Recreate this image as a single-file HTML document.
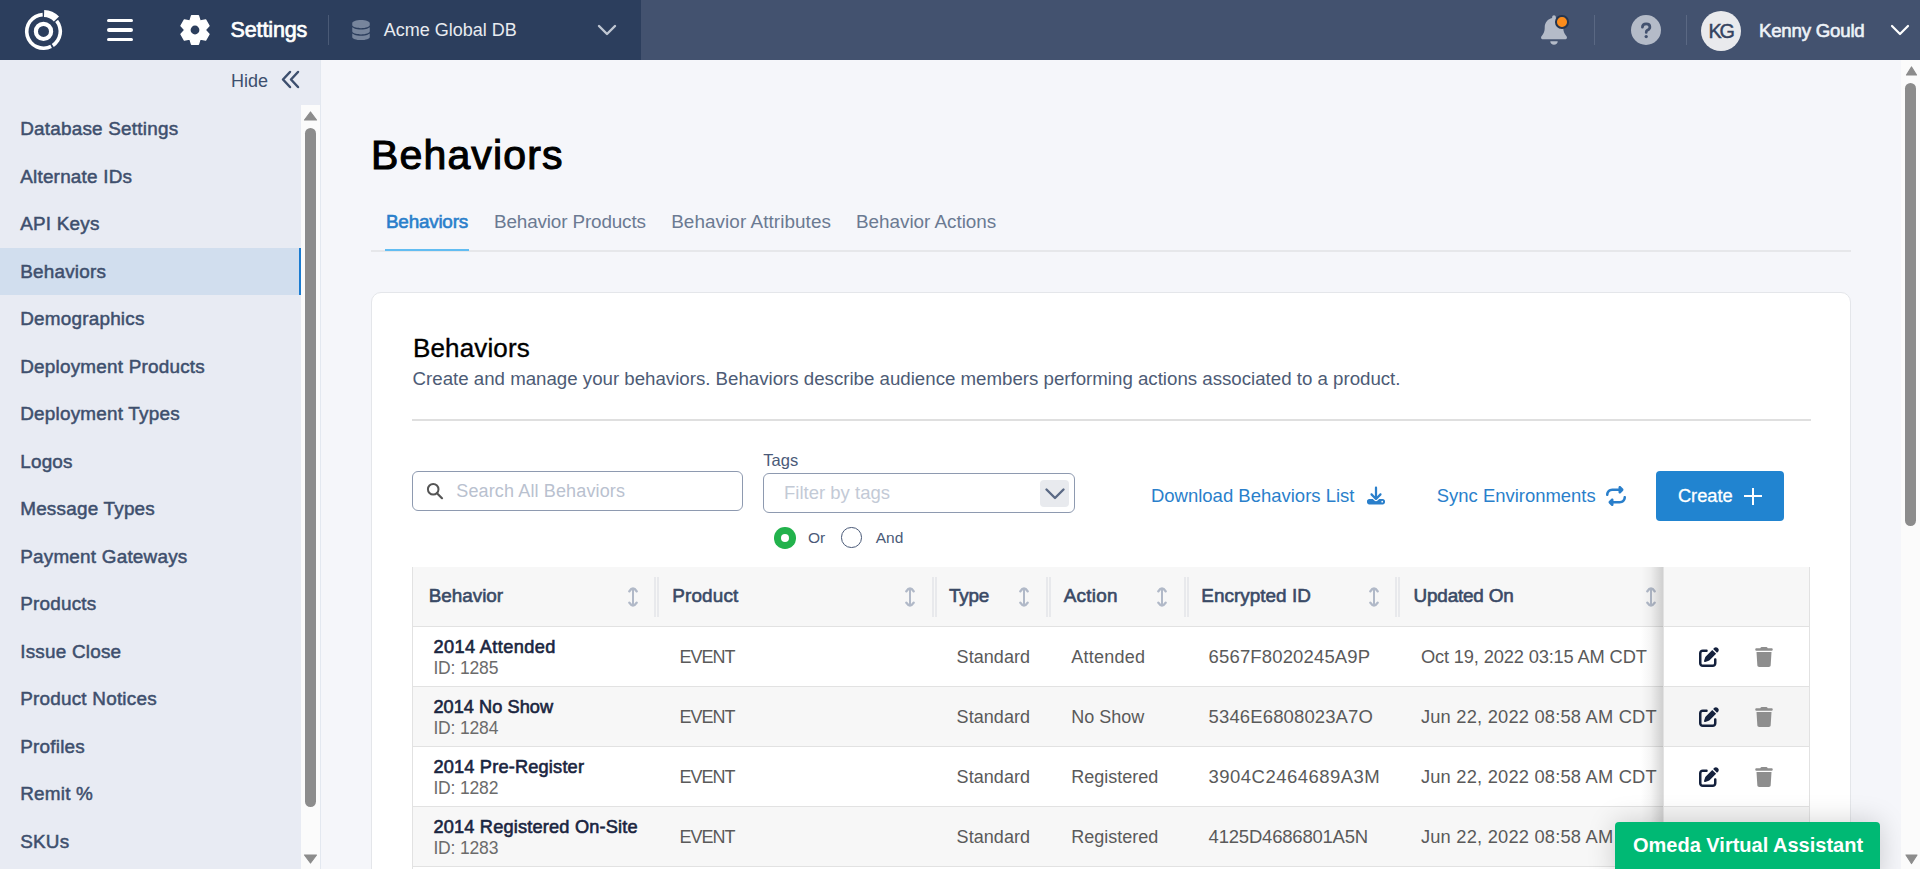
<!DOCTYPE html>
<html><head><meta charset="utf-8"><title>Behaviors</title>
<style>
html,body{margin:0;padding:0;}
body{width:1920px;height:869px;overflow:hidden;position:relative;background:#f5f6fa;font-family:"Liberation Sans", sans-serif;}
.t{position:absolute;white-space:nowrap;}
.r{position:absolute;box-sizing:content-box;}
svg.r{overflow:visible;}
</style></head><body>
<div class="r" style="left:0px;top:0px;width:641px;height:60px;background:#2c3e5d;"></div>
<div class="r" style="left:641px;top:0px;width:1279px;height:60px;background:#43526f;"></div>
<svg class="r" style="left:0px;top:0px;" width="100" height="60" viewBox="0 0 100 60"><circle cx="43.5" cy="31.4" r="7.6" fill="none" stroke="#fff" stroke-width="4.2"/><path d="M51.94 47.97 A18.6 18.6 0 1 1 42.59 12.82 L42.77 16.42 A15.0 15.0 0 1 0 50.31 44.77 ZM44.21 9.91 A21.5 21.5 0 0 1 59.02 16.52 L53.89 21.43 A14.4 14.4 0 0 0 43.98 17.01 ZM58.04 19.80 A18.6 18.6 0 0 1 53.77 46.91 L51.78 43.91 A15.0 15.0 0 0 0 55.22 22.04 Z" fill="#fff"/></svg>
<div class="r" style="left:107px;top:18.7px;width:26px;height:3.8px;border-radius:2px;background:#fff"></div>
<div class="r" style="left:107px;top:28.1px;width:26px;height:3.8px;border-radius:2px;background:#fff"></div>
<div class="r" style="left:107px;top:37.5px;width:26px;height:3.8px;border-radius:2px;background:#fff"></div>
<svg class="r" style="left:178px;top:13px;" width="34" height="34" viewBox="-17 -17 34 34"><path d="M-4.98 -9.36 L-3.41 -14.20 L3.41 -14.20 L4.98 -9.36 A10.6 10.6 0 0 1 5.62 -8.99 L5.62 -8.99 L10.59 -10.05 L14.00 -4.15 L10.59 -0.37 A10.6 10.6 0 0 1 10.59 0.37 L10.59 0.37 L14.00 4.15 L10.59 10.05 L5.62 8.99 A10.6 10.6 0 0 1 4.98 9.36 L4.98 9.36 L3.41 14.20 L-3.41 14.20 L-4.98 9.36 A10.6 10.6 0 0 1 -5.62 8.99 L-5.62 8.99 L-10.59 10.05 L-14.00 4.15 L-10.59 0.37 A10.6 10.6 0 0 1 -10.59 -0.37 L-10.59 -0.37 L-14.00 -4.15 L-10.59 -10.05 L-5.62 -8.99 A10.6 10.6 0 0 1 -4.98 -9.36 Z" fill="#fff" stroke="#fff" stroke-width="1.4" stroke-linejoin="round"/><circle r="4.4" fill="#2c3e5d"/></svg>
<div class="t" style="left:230.60px;top:20.00px;font-size:21.5px;line-height:21.5px;color:#ffffff;font-weight:400;letter-spacing:-0.141px;-webkit-text-stroke:0.7px #ffffff;">Settings</div>
<div class="r" style="left:328px;top:15px;width:1px;height:30px;background:#4a5a76;"></div>
<svg class="r" style="left:352px;top:20px;preserveAspectRatio:none" width="18" height="20" viewBox="0 0 448 512"><path d="M448 80v48c0 44.2-100.3 80-224 80S0 172.2 0 128V80C0 35.8 100.3 0 224 0S448 35.8 448 80zM393.2 214.7c20.8-7.4 39.9-16.9 54.8-28.6V288c0 44.2-100.3 80-224 80S0 332.2 0 288V186.1c14.9 11.8 34 21.2 54.8 28.6C99.7 230.7 159.5 240 224 240s124.3-9.3 169.2-25.3zM0 346.1c14.9 11.8 34 21.2 54.8 28.6C99.7 390.7 159.5 400 224 400s124.3-9.3 169.2-25.3c20.8-7.4 39.9-16.9 54.8-28.6V432c0 44.2-100.3 80-224 80S0 476.2 0 432V346.1z" fill="#77859c"/></svg>
<div class="t" style="left:383.70px;top:21.00px;font-size:18px;line-height:18px;color:#e8ebf0;font-weight:400;">Acme Global DB</div>
<svg class="r" style="left:596px;top:23px;" width="22" height="15" viewBox="0 0 22 15"><polyline points="3,3 11,11 19,3" fill="none" stroke="#c0c7d3" stroke-width="2.4" stroke-linecap="round" stroke-linejoin="round"/></svg>
<svg class="r" style="left:1541px;top:15px;" width="26" height="30" viewBox="0 0 448 512"><path d="M224 0c-17.7 0-32 14.3-32 32V51.2C119 66 64 130.6 64 208v18.8c0 47-17.3 92.4-48.5 127.6l-7.4 8.3c-8.4 9.4-10.4 22.9-5.3 34.4S19.4 416 32 416H416c12.6 0 24-7.4 29.2-18.9s3.1-25-5.3-34.4l-7.4-8.3C401.3 319.2 384 273.9 384 226.8V208c0-77.4-55-142-128-156.8V32c0-17.7-14.3-32-32-32zm45.3 493.3c12-12 18.7-28.3 18.7-45.3H224 160c0 17 6.7 33.3 18.7 45.3s28.3 18.7 45.3 18.7s33.3-6.7 45.3-18.7z" fill="#b4bbc8"/></svg>
<div class="r" style="left:1555.15px;top:15.35px;width:9.5px;height:9.5px;border-radius:50%;background:#fb8c1c;border:2px solid #25354f"></div>
<div class="r" style="left:1594px;top:15px;width:1px;height:30px;background:#5a6883;"></div>
<div class="r" style="left:1631px;top:15px;width:30px;height:30px;border-radius:50%;background:#b4bbc8"></div>
<svg class="r" style="left:1631px;top:15px;" width="30" height="30" viewBox="-15 -15 30 30"><path d="M-3.6 -2.8 Q-3.6 -6.2 0.2 -6.2 Q3.9 -6.2 3.9 -3.1 Q3.9 -1 1.3 0.3 Q0.2 0.9 0.2 2.4" fill="none" stroke="#43526f" stroke-width="2.7" stroke-linecap="round" stroke-linejoin="round"/><circle cx="0.2" cy="6.6" r="1.65" fill="#43526f"/></svg>
<div class="r" style="left:1686px;top:15px;width:1px;height:30px;background:#5a6883;"></div>
<div class="r" style="left:1701px;top:11px;width:40px;height:40px;border-radius:50%;background:#e9eaed"></div>
<div class="t" style="left:1708.60px;top:22.00px;font-size:19.8px;line-height:19.8px;color:#34435f;font-weight:400;letter-spacing:-2.311px;-webkit-text-stroke:0.45px #34435f">KG</div>
<div class="t" style="left:1758.90px;top:22.00px;font-size:18.7px;line-height:18.7px;color:#eef2f8;font-weight:400;letter-spacing:-0.222px;-webkit-text-stroke:0.6px #eef2f8;">Kenny Gould</div>
<svg class="r" style="left:1889px;top:22px;" width="22" height="16" viewBox="0 0 22 16"><polyline points="3,4 11,12 19,4" fill="none" stroke="#ffffff" stroke-width="2.2" stroke-linecap="round" stroke-linejoin="round"/></svg>
<div class="r" style="left:0px;top:60px;width:320px;height:809px;background:#e8ebf3;"></div>
<div class="r" style="left:320px;top:60px;width:1px;height:809px;background:#e3e8f0;"></div>
<div class="t" style="left:231.00px;top:72.00px;font-size:18px;line-height:18px;color:#3d4f6e;font-weight:400;">Hide</div>
<svg class="r" style="left:279px;top:69px;" width="24" height="22" viewBox="0 0 24 22"><polyline points="11,3 4,10.5 11,18" fill="none" stroke="#3d4f6e" stroke-width="2.5" stroke-linecap="round" stroke-linejoin="round"/><polyline points="19,3 12,10.5 19,18" fill="none" stroke="#3d4f6e" stroke-width="2.5" stroke-linecap="round" stroke-linejoin="round"/></svg>
<div class="t" style="left:20.20px;top:120.00px;font-size:18.9px;line-height:18.9px;color:#3e4f6d;font-weight:400;letter-spacing:0.22px;-webkit-text-stroke:0.5px #3e4f6d">Database Settings</div>
<div class="t" style="left:20.20px;top:168.00px;font-size:18.9px;line-height:18.9px;color:#3e4f6d;font-weight:400;letter-spacing:0.22px;-webkit-text-stroke:0.5px #3e4f6d">Alternate IDs</div>
<div class="t" style="left:20.20px;top:215.00px;font-size:18.9px;line-height:18.9px;color:#3e4f6d;font-weight:400;letter-spacing:0.22px;-webkit-text-stroke:0.5px #3e4f6d">API Keys</div>
<div class="r" style="left:0;top:248.0px;width:299px;height:47px;background:#d1deee"></div>
<div class="r" style="left:299px;top:248.0px;width:2px;height:47px;background:#1a7bd0"></div>
<div class="t" style="left:20.20px;top:263.00px;font-size:18.9px;line-height:18.9px;color:#3e4f6d;font-weight:400;letter-spacing:0.22px;-webkit-text-stroke:0.5px #3e4f6d">Behaviors</div>
<div class="t" style="left:20.20px;top:310.00px;font-size:18.9px;line-height:18.9px;color:#3e4f6d;font-weight:400;letter-spacing:0.22px;-webkit-text-stroke:0.5px #3e4f6d">Demographics</div>
<div class="t" style="left:20.20px;top:358.00px;font-size:18.9px;line-height:18.9px;color:#3e4f6d;font-weight:400;letter-spacing:0.22px;-webkit-text-stroke:0.5px #3e4f6d">Deployment Products</div>
<div class="t" style="left:20.20px;top:405.00px;font-size:18.9px;line-height:18.9px;color:#3e4f6d;font-weight:400;letter-spacing:0.22px;-webkit-text-stroke:0.5px #3e4f6d">Deployment Types</div>
<div class="t" style="left:20.20px;top:453.00px;font-size:18.9px;line-height:18.9px;color:#3e4f6d;font-weight:400;letter-spacing:0.22px;-webkit-text-stroke:0.5px #3e4f6d">Logos</div>
<div class="t" style="left:20.20px;top:500.00px;font-size:18.9px;line-height:18.9px;color:#3e4f6d;font-weight:400;letter-spacing:0.22px;-webkit-text-stroke:0.5px #3e4f6d">Message Types</div>
<div class="t" style="left:20.20px;top:548.00px;font-size:18.9px;line-height:18.9px;color:#3e4f6d;font-weight:400;letter-spacing:0.22px;-webkit-text-stroke:0.5px #3e4f6d">Payment Gateways</div>
<div class="t" style="left:20.20px;top:595.00px;font-size:18.9px;line-height:18.9px;color:#3e4f6d;font-weight:400;letter-spacing:0.22px;-webkit-text-stroke:0.5px #3e4f6d">Products</div>
<div class="t" style="left:20.20px;top:643.00px;font-size:18.9px;line-height:18.9px;color:#3e4f6d;font-weight:400;letter-spacing:0.22px;-webkit-text-stroke:0.5px #3e4f6d">Issue Close</div>
<div class="t" style="left:20.20px;top:690.00px;font-size:18.9px;line-height:18.9px;color:#3e4f6d;font-weight:400;letter-spacing:0.22px;-webkit-text-stroke:0.5px #3e4f6d">Product Notices</div>
<div class="t" style="left:20.20px;top:738.00px;font-size:18.9px;line-height:18.9px;color:#3e4f6d;font-weight:400;letter-spacing:0.22px;-webkit-text-stroke:0.5px #3e4f6d">Profiles</div>
<div class="t" style="left:20.20px;top:785.00px;font-size:18.9px;line-height:18.9px;color:#3e4f6d;font-weight:400;letter-spacing:0.22px;-webkit-text-stroke:0.5px #3e4f6d">Remit %</div>
<div class="t" style="left:20.20px;top:833.00px;font-size:18.9px;line-height:18.9px;color:#3e4f6d;font-weight:400;letter-spacing:0.22px;-webkit-text-stroke:0.5px #3e4f6d">SKUs</div>
<div class="r" style="left:301px;top:105px;width:19px;height:764px;background:#fbfbfb;"></div>
<svg class="r" style="left:301px;top:105px;" width="19" height="20" viewBox="0 0 19 20"><polygon points="9.5,7 15.5,15 3.5,15" fill="#8c8c8c" stroke="#8c8c8c" stroke-width="1.2" stroke-linejoin="round"/></svg>
<div class="r" style="left:305px;top:128px;width:11px;height:679px;border-radius:5.5px;background:#8c8c8c"></div>
<svg class="r" style="left:301px;top:850px;" width="19" height="19" viewBox="0 0 19 19"><polygon points="3.5,5 15.5,5 9.5,13" fill="#8c8c8c" stroke="#8c8c8c" stroke-width="1.2" stroke-linejoin="round"/></svg>
<div class="r" style="left:321px;top:60px;width:1580px;height:809px;background:#f5f6fa;"></div>
<div class="t" style="left:371.00px;top:135.00px;font-size:41px;line-height:41px;color:#000000;font-weight:400;letter-spacing:1.147px;-webkit-text-stroke:1.1px #000">Behaviors</div>
<div class="r" style="left:371px;top:250px;width:1480px;height:2px;background:#e6e7ea;"></div>
<div class="r" style="left:385px;top:248.8px;width:84px;height:2.2px;background:#62bdf2;"></div>
<div class="t" style="left:386.00px;top:213.00px;font-size:18.9px;line-height:18.9px;color:#2a7fcb;font-weight:400;letter-spacing:-0.231px;-webkit-text-stroke:0.6px #2a7fcb;">Behaviors</div>
<div class="t" style="left:494.00px;top:213.00px;font-size:18.9px;line-height:18.9px;color:#6b7a92;font-weight:400;letter-spacing:-0.152px;">Behavior Products</div>
<div class="t" style="left:671.20px;top:213.00px;font-size:18.9px;line-height:18.9px;color:#6b7a92;font-weight:400;letter-spacing:0.065px;">Behavior Attributes</div>
<div class="t" style="left:856.00px;top:213.00px;font-size:18.9px;line-height:18.9px;color:#6b7a92;font-weight:400;letter-spacing:-0.032px;">Behavior Actions</div>
<div class="r" style="left:371px;top:292px;width:1478px;height:600px;background:#fff;border:1px solid #e4e6ea;border-radius:10px"></div>
<div class="t" style="left:413.00px;top:335.00px;font-size:26px;line-height:26px;color:#000000;font-weight:400;letter-spacing:0.135px;-webkit-text-stroke:0.35px #000">Behaviors</div>
<div class="t" style="left:412.60px;top:370.00px;font-size:18.7px;line-height:18.7px;color:#4d5b75;font-weight:400;letter-spacing:-0.009px;">Create and manage your behaviors. Behaviors describe audience members performing actions associated to a product.</div>
<div class="r" style="left:412px;top:419px;width:1399px;height:2px;background:#dfdfdf;"></div>
<div class="r" style="left:412px;top:471px;width:329px;height:38px;border:1px solid #8e9ab0;border-radius:6px;background:#fff"></div>
<svg class="r" style="left:426px;top:482px;" width="18" height="18" viewBox="0 0 18 18"><circle cx="7.2" cy="7.3" r="5.3" fill="none" stroke="#555" stroke-width="2"/><line x1="11" y1="11.2" x2="16" y2="16.2" stroke="#555" stroke-width="2.2" stroke-linecap="round"/></svg>
<div class="t" style="left:456.25px;top:482.00px;font-size:18px;line-height:18px;color:#b9c1cf;font-weight:400;letter-spacing:0.138px;">Search All Behaviors</div>
<div class="t" style="left:763.30px;top:452.00px;font-size:16.5px;line-height:16.5px;color:#4a5a78;font-weight:400;">Tags</div>
<div class="r" style="left:763px;top:473px;width:310px;height:38px;border:1px solid #8e9ab0;border-radius:6px;background:#fff"></div>
<div class="t" style="left:784.00px;top:484.00px;font-size:18.5px;line-height:18.5px;color:#c3cad6;font-weight:400;letter-spacing:0.008px;">Filter by tags</div>
<div class="r" style="left:1040px;top:479.5px;width:29px;height:27.5px;border-radius:4px;background:#e8eaee"></div>
<svg class="r" style="left:1043px;top:485px;" width="24" height="18" viewBox="0 0 24 18"><polyline points="3.5,4.5 12,13 20.5,4.5" fill="none" stroke="#5b6a85" stroke-width="2.4" stroke-linecap="round" stroke-linejoin="round"/></svg>
<div class="r" style="left:774.2px;top:527.1px;width:21.6px;height:21.6px;border-radius:50%;background:#22b24c"></div>
<div class="r" style="left:780.85px;top:533.75px;width:8.3px;height:8.3px;border-radius:50%;background:#fff"></div>
<div class="t" style="left:808.00px;top:530.00px;font-size:15.5px;line-height:15.5px;color:#4a5a78;font-weight:400;">Or</div>
<div class="r" style="left:841.3px;top:527.2px;width:18.4px;height:18.4px;border-radius:50%;border:1.5px solid #4a5a78;background:#fff"></div>
<div class="t" style="left:875.70px;top:530.00px;font-size:15.5px;line-height:15.5px;color:#4a5a78;font-weight:400;">And</div>
<div class="t" style="left:1150.90px;top:487.00px;font-size:18.5px;line-height:18.5px;color:#2a7fcb;font-weight:400;">Download Behaviors List</div>
<svg class="r" style="left:1367px;top:486px;" width="18" height="19" viewBox="0 0 512 512"><path d="M288 32c0-17.7-14.3-32-32-32s-32 14.3-32 32V274.7l-73.4-73.4c-12.5-12.5-32.8-12.5-45.3 0s-12.5 32.8 0 45.3l128 128c12.5 12.5 32.8 12.5 45.3 0l128-128c12.5-12.5 12.5-32.8 0-45.3s-32.8-12.5-45.3 0L288 274.7V32zM64 352c-35.3 0-64 28.7-64 64v32c0 35.3 28.7 64 64 64H448c35.3 0 64-28.7 64-64V416c0-35.3-28.7-64-64-64H346.5l-45.3 45.3c-25 25-65.5 25-90.5 0L165.5 352H64zm368 56a24 24 0 1 1 0 48 24 24 0 1 1 0-48z" fill="#2a7fcb"/></svg>
<div class="t" style="left:1436.80px;top:487.00px;font-size:18.45px;line-height:18.45px;color:#2a7fcb;font-weight:400;">Sync Environments</div>
<svg class="r" style="left:1606px;top:486px;" width="20" height="20" viewBox="0 0 512 512"><path d="M0 224c0 17.7 14.3 32 32 32s32-14.3 32-32c0-53 43-96 96-96H320v32c0 12.9 7.8 24.6 19.8 29.6s25.7 2.2 34.9-6.9l64-64c12.5-12.5 12.5-32.8 0-45.3l-64-64c-9.2-9.2-22.9-11.9-34.9-6.9S320 19.1 320 32V64H160C71.6 64 0 135.6 0 224zm512 64c0-17.7-14.3-32-32-32s-32 14.3-32 32c0 53-43 96-96 96H192V352c0-12.9-7.8-24.6-19.8-29.6s-25.7-2.2-34.9 6.9l-64 64c-12.5 12.5-12.5 32.8 0 45.3l64 64c9.2 9.2 22.9 11.9 34.9 6.9s19.8-16.6 19.8-29.6V448H352c88.4 0 160-71.6 160-160z" fill="#2a7fcb"/></svg>
<div class="r" style="left:1656px;top:471px;width:128px;height:50px;border-radius:4px;background:#2184d0"></div>
<div class="t" style="left:1677.90px;top:487.00px;font-size:18.3px;line-height:18.3px;color:#ffffff;font-weight:400;-webkit-text-stroke:0.3px #fff">Create</div>
<div class="r" style="left:1744px;top:495.2px;width:18px;height:2px;background:#fff;"></div>
<div class="r" style="left:1752px;top:487.7px;width:2px;height:17px;background:#fff;"></div>
<div class="r" style="left:412px;top:567px;width:1398px;height:60px;background:#f7f7f7;"></div>
<div class="t" style="left:428.70px;top:587.00px;font-size:18.9px;line-height:18.9px;color:#3a4a66;font-weight:400;letter-spacing:-0.014px;-webkit-text-stroke:0.6px #3a4a66;">Behavior</div>
<svg class="r" style="left:627.8px;top:585.5px;" width="10" height="22" viewBox="0 0 10 22"><path d="M5 2.5 L5 19.5" stroke="#b1b9c8" stroke-width="2" fill="none"/><path d="M1.3 5.3 Q5 -0.4 8.7 5.3" stroke="#b1b9c8" stroke-width="2.4" fill="none" stroke-linecap="round"/><path d="M1.3 16.7 Q5 22.4 8.7 16.7" stroke="#b1b9c8" stroke-width="2.4" fill="none" stroke-linecap="round"/></svg>
<div class="t" style="left:672.20px;top:587.00px;font-size:18.9px;line-height:18.9px;color:#3a4a66;font-weight:400;letter-spacing:0.160px;-webkit-text-stroke:0.6px #3a4a66;">Product</div>
<svg class="r" style="left:905px;top:585.5px;" width="10" height="22" viewBox="0 0 10 22"><path d="M5 2.5 L5 19.5" stroke="#b1b9c8" stroke-width="2" fill="none"/><path d="M1.3 5.3 Q5 -0.4 8.7 5.3" stroke="#b1b9c8" stroke-width="2.4" fill="none" stroke-linecap="round"/><path d="M1.3 16.7 Q5 22.4 8.7 16.7" stroke="#b1b9c8" stroke-width="2.4" fill="none" stroke-linecap="round"/></svg>
<div class="t" style="left:949.10px;top:587.00px;font-size:18.9px;line-height:18.9px;color:#3a4a66;font-weight:400;letter-spacing:-0.225px;-webkit-text-stroke:0.6px #3a4a66;">Type</div>
<svg class="r" style="left:1019px;top:585.5px;" width="10" height="22" viewBox="0 0 10 22"><path d="M5 2.5 L5 19.5" stroke="#b1b9c8" stroke-width="2" fill="none"/><path d="M1.3 5.3 Q5 -0.4 8.7 5.3" stroke="#b1b9c8" stroke-width="2.4" fill="none" stroke-linecap="round"/><path d="M1.3 16.7 Q5 22.4 8.7 16.7" stroke="#b1b9c8" stroke-width="2.4" fill="none" stroke-linecap="round"/></svg>
<div class="t" style="left:1063.70px;top:587.00px;font-size:18.9px;line-height:18.9px;color:#3a4a66;font-weight:400;letter-spacing:0.273px;-webkit-text-stroke:0.6px #3a4a66;">Action</div>
<svg class="r" style="left:1156.8px;top:585.5px;" width="10" height="22" viewBox="0 0 10 22"><path d="M5 2.5 L5 19.5" stroke="#b1b9c8" stroke-width="2" fill="none"/><path d="M1.3 5.3 Q5 -0.4 8.7 5.3" stroke="#b1b9c8" stroke-width="2.4" fill="none" stroke-linecap="round"/><path d="M1.3 16.7 Q5 22.4 8.7 16.7" stroke="#b1b9c8" stroke-width="2.4" fill="none" stroke-linecap="round"/></svg>
<div class="t" style="left:1201.30px;top:587.00px;font-size:18.9px;line-height:18.9px;color:#3a4a66;font-weight:400;letter-spacing:0.032px;-webkit-text-stroke:0.6px #3a4a66;">Encrypted ID</div>
<svg class="r" style="left:1368.5px;top:585.5px;" width="10" height="22" viewBox="0 0 10 22"><path d="M5 2.5 L5 19.5" stroke="#b1b9c8" stroke-width="2" fill="none"/><path d="M1.3 5.3 Q5 -0.4 8.7 5.3" stroke="#b1b9c8" stroke-width="2.4" fill="none" stroke-linecap="round"/><path d="M1.3 16.7 Q5 22.4 8.7 16.7" stroke="#b1b9c8" stroke-width="2.4" fill="none" stroke-linecap="round"/></svg>
<div class="t" style="left:1413.60px;top:587.00px;font-size:18.9px;line-height:18.9px;color:#3a4a66;font-weight:400;letter-spacing:-0.191px;-webkit-text-stroke:0.6px #3a4a66;">Updated On</div>
<svg class="r" style="left:1645.5px;top:585.5px;" width="10" height="22" viewBox="0 0 10 22"><path d="M5 2.5 L5 19.5" stroke="#b1b9c8" stroke-width="2" fill="none"/><path d="M1.3 5.3 Q5 -0.4 8.7 5.3" stroke="#b1b9c8" stroke-width="2.4" fill="none" stroke-linecap="round"/><path d="M1.3 16.7 Q5 22.4 8.7 16.7" stroke="#b1b9c8" stroke-width="2.4" fill="none" stroke-linecap="round"/></svg>
<div class="r" style="left:654px;top:577px;width:2px;height:40px;background:#e8e9ec;"></div>
<div class="r" style="left:657px;top:577px;width:2px;height:40px;background:#e8e9ec;"></div>
<div class="r" style="left:932px;top:577px;width:2px;height:40px;background:#e8e9ec;"></div>
<div class="r" style="left:935px;top:577px;width:2px;height:40px;background:#e8e9ec;"></div>
<div class="r" style="left:1046px;top:577px;width:2px;height:40px;background:#e8e9ec;"></div>
<div class="r" style="left:1049px;top:577px;width:2px;height:40px;background:#e8e9ec;"></div>
<div class="r" style="left:1184px;top:577px;width:2px;height:40px;background:#e8e9ec;"></div>
<div class="r" style="left:1187px;top:577px;width:2px;height:40px;background:#e8e9ec;"></div>
<div class="r" style="left:1395px;top:577px;width:2px;height:40px;background:#e8e9ec;"></div>
<div class="r" style="left:1398px;top:577px;width:2px;height:40px;background:#e8e9ec;"></div>
<div class="r" style="left:412px;top:626px;width:1398px;height:1px;background:#e2e2e2;"></div>
<div class="r" style="left:412px;top:627px;width:1398px;height:59px;background:#ffffff;"></div>
<div class="r" style="left:412px;top:686px;width:1398px;height:1px;background:#e2e2e2;"></div>
<div class="t" style="left:433.40px;top:638.00px;font-size:18.2px;line-height:18.2px;color:#1a2540;font-weight:400;letter-spacing:0.383px;-webkit-text-stroke:0.6px #1a2540;">2014 Attended</div>
<div class="t" style="left:433.40px;top:660.00px;font-size:17.5px;line-height:17.5px;color:#6b6b6b;font-weight:400;letter-spacing:-0.166px;">ID: 1285</div>
<div class="t" style="left:679.40px;top:648.00px;font-size:18px;line-height:18px;color:#5a5a5a;font-weight:400;letter-spacing:-0.978px;">EVENT</div>
<div class="t" style="left:956.60px;top:648.00px;font-size:18px;line-height:18px;color:#5a5a5a;font-weight:400;letter-spacing:0.050px;">Standard</div>
<div class="t" style="left:1071.30px;top:648.00px;font-size:18px;line-height:18px;color:#5a5a5a;font-weight:400;letter-spacing:0.220px;">Attended</div>
<div class="t" style="left:1208.60px;top:648.00px;font-size:18.5px;line-height:18.5px;color:#5a5a5a;font-weight:400;letter-spacing:0.147px;">6567F8020245A9P</div>
<div class="t" style="left:1420.90px;top:648.00px;font-size:18.3px;line-height:18.3px;color:#5a5a5a;font-weight:400;letter-spacing:-0.154px;">Oct 19, 2022 03:15 AM CDT</div>
<div class="r" style="left:412px;top:687px;width:1398px;height:59px;background:#f7f7f7;"></div>
<div class="r" style="left:412px;top:746px;width:1398px;height:1px;background:#e2e2e2;"></div>
<div class="t" style="left:433.40px;top:698.00px;font-size:18.2px;line-height:18.2px;color:#1a2540;font-weight:400;letter-spacing:0.041px;-webkit-text-stroke:0.6px #1a2540;">2014 No Show</div>
<div class="t" style="left:433.40px;top:720.00px;font-size:17.5px;line-height:17.5px;color:#6b6b6b;font-weight:400;letter-spacing:-0.166px;">ID: 1284</div>
<div class="t" style="left:679.40px;top:708.00px;font-size:18px;line-height:18px;color:#5a5a5a;font-weight:400;letter-spacing:-0.978px;">EVENT</div>
<div class="t" style="left:956.60px;top:708.00px;font-size:18px;line-height:18px;color:#5a5a5a;font-weight:400;letter-spacing:0.050px;">Standard</div>
<div class="t" style="left:1071.30px;top:708.00px;font-size:18px;line-height:18px;color:#5a5a5a;font-weight:400;letter-spacing:-0.015px;">No Show</div>
<div class="t" style="left:1208.60px;top:708.00px;font-size:18.5px;line-height:18.5px;color:#5a5a5a;font-weight:400;letter-spacing:0.126px;">5346E6808023A7O</div>
<div class="t" style="left:1420.90px;top:708.00px;font-size:18.3px;line-height:18.3px;color:#5a5a5a;font-weight:400;letter-spacing:0.212px;">Jun 22, 2022 08:58 AM CDT</div>
<div class="r" style="left:412px;top:747px;width:1398px;height:59px;background:#ffffff;"></div>
<div class="r" style="left:412px;top:806px;width:1398px;height:1px;background:#e2e2e2;"></div>
<div class="t" style="left:433.40px;top:758.00px;font-size:18.2px;line-height:18.2px;color:#1a2540;font-weight:400;letter-spacing:0.187px;-webkit-text-stroke:0.6px #1a2540;">2014 Pre-Register</div>
<div class="t" style="left:433.40px;top:780.00px;font-size:17.5px;line-height:17.5px;color:#6b6b6b;font-weight:400;letter-spacing:-0.166px;">ID: 1282</div>
<div class="t" style="left:679.40px;top:768.00px;font-size:18px;line-height:18px;color:#5a5a5a;font-weight:400;letter-spacing:-0.978px;">EVENT</div>
<div class="t" style="left:956.60px;top:768.00px;font-size:18px;line-height:18px;color:#5a5a5a;font-weight:400;letter-spacing:0.050px;">Standard</div>
<div class="t" style="left:1071.30px;top:768.00px;font-size:18px;line-height:18px;color:#5a5a5a;font-weight:400;letter-spacing:-0.005px;">Registered</div>
<div class="t" style="left:1208.60px;top:768.00px;font-size:18.5px;line-height:18.5px;color:#5a5a5a;font-weight:400;letter-spacing:0.459px;">3904C2464689A3M</div>
<div class="t" style="left:1420.90px;top:768.00px;font-size:18.3px;line-height:18.3px;color:#5a5a5a;font-weight:400;letter-spacing:0.212px;">Jun 22, 2022 08:58 AM CDT</div>
<div class="r" style="left:412px;top:807px;width:1398px;height:59px;background:#f7f7f7;"></div>
<div class="r" style="left:412px;top:866px;width:1398px;height:1px;background:#e2e2e2;"></div>
<div class="t" style="left:433.40px;top:818.00px;font-size:18.2px;line-height:18.2px;color:#1a2540;font-weight:400;letter-spacing:0.186px;-webkit-text-stroke:0.6px #1a2540;">2014 Registered On-Site</div>
<div class="t" style="left:433.40px;top:840.00px;font-size:17.5px;line-height:17.5px;color:#6b6b6b;font-weight:400;letter-spacing:-0.166px;">ID: 1283</div>
<div class="t" style="left:679.40px;top:828.00px;font-size:18px;line-height:18px;color:#5a5a5a;font-weight:400;letter-spacing:-0.978px;">EVENT</div>
<div class="t" style="left:956.60px;top:828.00px;font-size:18px;line-height:18px;color:#5a5a5a;font-weight:400;letter-spacing:0.050px;">Standard</div>
<div class="t" style="left:1071.30px;top:828.00px;font-size:18px;line-height:18px;color:#5a5a5a;font-weight:400;letter-spacing:-0.005px;">Registered</div>
<div class="t" style="left:1208.60px;top:828.00px;font-size:18.5px;line-height:18.5px;color:#5a5a5a;font-weight:400;letter-spacing:-0.209px;">4125D4686801A5N</div>
<div class="t" style="left:1420.90px;top:828.00px;font-size:18.3px;line-height:18.3px;color:#5a5a5a;font-weight:400;letter-spacing:0.212px;">Jun 22, 2022 08:58 AM CDT</div>
<div class="r" style="left:412px;top:567px;width:1px;height:302px;background:#e2e2e2;"></div>
<div class="r" style="left:1641px;top:567px;width:22px;height:302px;background:linear-gradient(to right, rgba(0,0,0,0) 0%, rgba(0,0,0,0.04) 45%, rgba(0,0,0,0.16) 100%)"></div>
<div class="r" style="left:1663px;top:567px;width:147px;height:59px;background:#f7f7f7;"></div>
<div class="r" style="left:1663px;top:626px;width:147px;height:1px;background:#e2e2e2;"></div>
<div class="r" style="left:1663px;top:627px;width:147px;height:59px;background:#ffffff;"></div>
<div class="r" style="left:1663px;top:686px;width:147px;height:1px;background:#e2e2e2;"></div>
<svg class="r" style="left:1699px;top:647px;" width="20" height="20" viewBox="0 0 512 512"><path d="M471.6 21.7c-21.9-21.9-57.3-21.9-79.2 0L362.3 51.7l97.9 97.9 30.1-30.1c21.9-21.9 21.9-57.3 0-79.2L471.6 21.7zm-299.2 220c-6.1 6.1-10.8 13.6-13.5 21.9l-29.6 88.8c-2.9 8.6-.6 18.1 5.8 24.6s15.9 8.7 24.6 5.8l88.8-29.6c8.2-2.7 15.7-7.4 21.9-13.5L437.7 172.3 339.7 74.3 172.4 241.7zM96 64C43 64 0 107 0 160V416c0 53 43 96 96 96H352c53 0 96-43 96-96V320c0-17.7-14.3-32-32-32s-32 14.3-32 32v96c0 17.7-14.3 32-32 32H96c-17.7 0-32-14.3-32-32V160c0-17.7 14.3-32 32-32h96c17.7 0 32-14.3 32-32s-14.3-32-32-32H96z" fill="#14213d"/></svg>
<svg class="r" style="left:1755px;top:647px;" width="18" height="20" viewBox="0 0 448 512"><path d="M135.2 17.7L128 32H32C14.3 32 0 46.3 0 64S14.3 96 32 96H416c17.7 0 32-14.3 32-32s-14.3-32-32-32H320l-7.2-14.3C307.4 6.8 296.3 0 284.2 0H163.8c-12.1 0-23.2 6.8-28.6 17.7zM416 128H32L53.2 467c1.6 25.3 22.6 45 47.9 45H346.9c25.3 0 46.3-19.7 47.9-45L416 128z" fill="#8e8e8e"/></svg>
<div class="r" style="left:1663px;top:687px;width:147px;height:59px;background:#f5f5f5;"></div>
<div class="r" style="left:1663px;top:746px;width:147px;height:1px;background:#e2e2e2;"></div>
<svg class="r" style="left:1699px;top:707px;" width="20" height="20" viewBox="0 0 512 512"><path d="M471.6 21.7c-21.9-21.9-57.3-21.9-79.2 0L362.3 51.7l97.9 97.9 30.1-30.1c21.9-21.9 21.9-57.3 0-79.2L471.6 21.7zm-299.2 220c-6.1 6.1-10.8 13.6-13.5 21.9l-29.6 88.8c-2.9 8.6-.6 18.1 5.8 24.6s15.9 8.7 24.6 5.8l88.8-29.6c8.2-2.7 15.7-7.4 21.9-13.5L437.7 172.3 339.7 74.3 172.4 241.7zM96 64C43 64 0 107 0 160V416c0 53 43 96 96 96H352c53 0 96-43 96-96V320c0-17.7-14.3-32-32-32s-32 14.3-32 32v96c0 17.7-14.3 32-32 32H96c-17.7 0-32-14.3-32-32V160c0-17.7 14.3-32 32-32h96c17.7 0 32-14.3 32-32s-14.3-32-32-32H96z" fill="#14213d"/></svg>
<svg class="r" style="left:1755px;top:707px;" width="18" height="20" viewBox="0 0 448 512"><path d="M135.2 17.7L128 32H32C14.3 32 0 46.3 0 64S14.3 96 32 96H416c17.7 0 32-14.3 32-32s-14.3-32-32-32H320l-7.2-14.3C307.4 6.8 296.3 0 284.2 0H163.8c-12.1 0-23.2 6.8-28.6 17.7zM416 128H32L53.2 467c1.6 25.3 22.6 45 47.9 45H346.9c25.3 0 46.3-19.7 47.9-45L416 128z" fill="#8e8e8e"/></svg>
<div class="r" style="left:1663px;top:747px;width:147px;height:59px;background:#ffffff;"></div>
<div class="r" style="left:1663px;top:806px;width:147px;height:1px;background:#e2e2e2;"></div>
<svg class="r" style="left:1699px;top:767px;" width="20" height="20" viewBox="0 0 512 512"><path d="M471.6 21.7c-21.9-21.9-57.3-21.9-79.2 0L362.3 51.7l97.9 97.9 30.1-30.1c21.9-21.9 21.9-57.3 0-79.2L471.6 21.7zm-299.2 220c-6.1 6.1-10.8 13.6-13.5 21.9l-29.6 88.8c-2.9 8.6-.6 18.1 5.8 24.6s15.9 8.7 24.6 5.8l88.8-29.6c8.2-2.7 15.7-7.4 21.9-13.5L437.7 172.3 339.7 74.3 172.4 241.7zM96 64C43 64 0 107 0 160V416c0 53 43 96 96 96H352c53 0 96-43 96-96V320c0-17.7-14.3-32-32-32s-32 14.3-32 32v96c0 17.7-14.3 32-32 32H96c-17.7 0-32-14.3-32-32V160c0-17.7 14.3-32 32-32h96c17.7 0 32-14.3 32-32s-14.3-32-32-32H96z" fill="#14213d"/></svg>
<svg class="r" style="left:1755px;top:767px;" width="18" height="20" viewBox="0 0 448 512"><path d="M135.2 17.7L128 32H32C14.3 32 0 46.3 0 64S14.3 96 32 96H416c17.7 0 32-14.3 32-32s-14.3-32-32-32H320l-7.2-14.3C307.4 6.8 296.3 0 284.2 0H163.8c-12.1 0-23.2 6.8-28.6 17.7zM416 128H32L53.2 467c1.6 25.3 22.6 45 47.9 45H346.9c25.3 0 46.3-19.7 47.9-45L416 128z" fill="#8e8e8e"/></svg>
<div class="r" style="left:1663px;top:807px;width:147px;height:59px;background:#f5f5f5;"></div>
<div class="r" style="left:1663px;top:866px;width:147px;height:1px;background:#e2e2e2;"></div>
<svg class="r" style="left:1699px;top:827px;" width="20" height="20" viewBox="0 0 512 512"><path d="M471.6 21.7c-21.9-21.9-57.3-21.9-79.2 0L362.3 51.7l97.9 97.9 30.1-30.1c21.9-21.9 21.9-57.3 0-79.2L471.6 21.7zm-299.2 220c-6.1 6.1-10.8 13.6-13.5 21.9l-29.6 88.8c-2.9 8.6-.6 18.1 5.8 24.6s15.9 8.7 24.6 5.8l88.8-29.6c8.2-2.7 15.7-7.4 21.9-13.5L437.7 172.3 339.7 74.3 172.4 241.7zM96 64C43 64 0 107 0 160V416c0 53 43 96 96 96H352c53 0 96-43 96-96V320c0-17.7-14.3-32-32-32s-32 14.3-32 32v96c0 17.7-14.3 32-32 32H96c-17.7 0-32-14.3-32-32V160c0-17.7 14.3-32 32-32h96c17.7 0 32-14.3 32-32s-14.3-32-32-32H96z" fill="#14213d"/></svg>
<svg class="r" style="left:1755px;top:827px;" width="18" height="20" viewBox="0 0 448 512"><path d="M135.2 17.7L128 32H32C14.3 32 0 46.3 0 64S14.3 96 32 96H416c17.7 0 32-14.3 32-32s-14.3-32-32-32H320l-7.2-14.3C307.4 6.8 296.3 0 284.2 0H163.8c-12.1 0-23.2 6.8-28.6 17.7zM416 128H32L53.2 467c1.6 25.3 22.6 45 47.9 45H346.9c25.3 0 46.3-19.7 47.9-45L416 128z" fill="#8e8e8e"/></svg>
<div class="r" style="left:1663px;top:567px;width:1px;height:302px;background:#e2e2e2;"></div>
<div class="r" style="left:1809px;top:567px;width:1px;height:302px;background:#e2e2e2;"></div>
<div class="r" style="left:1615px;top:822px;width:265px;height:60px;border-radius:4px;background:#00b974;box-shadow:0 0 28px rgba(0,0,0,0.18)"></div>
<div class="t" style="left:1633.00px;top:835.00px;font-size:20px;line-height:20px;color:#ffffff;font-weight:700;">Omeda Virtual Assistant</div>
<div class="r" style="left:1901px;top:60px;width:19px;height:809px;background:#fbfbfb;"></div>
<svg class="r" style="left:1901px;top:60px;" width="19" height="20" viewBox="0 0 19 20"><polygon points="10.5,7 15.5,15 5.5,15" fill="#8c8c8c" stroke="#8c8c8c" stroke-width="1.2" stroke-linejoin="round"/></svg>
<div class="r" style="left:1905px;top:82.6px;width:11px;height:443.4px;border-radius:5.5px;background:#8c8c8c"></div>
<svg class="r" style="left:1901px;top:850px;" width="19" height="19" viewBox="0 0 19 19"><polygon points="5,5 16,5 10.5,13.5" fill="#8c8c8c" stroke="#8c8c8c" stroke-width="1.2" stroke-linejoin="round"/></svg>

</body></html>
